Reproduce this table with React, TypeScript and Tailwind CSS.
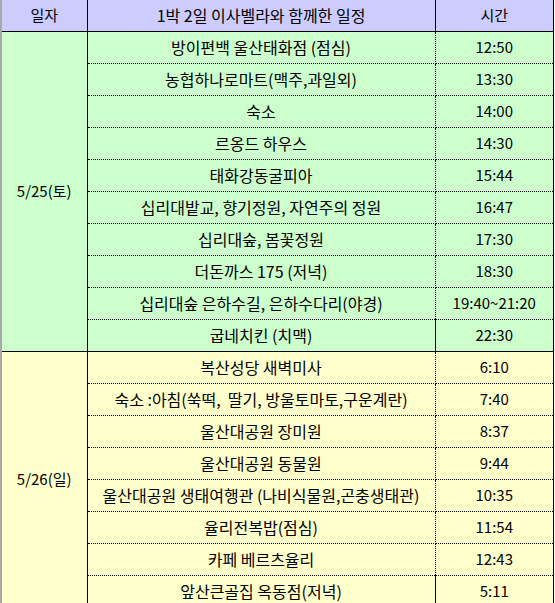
import React from 'react';

type Item = { place: string; time: string };

const day1: Item[] = [
  { place: '방이편백 울산태화점 (점심)', time: '12:50' },
  { place: '농협하나로마트(맥주,과일외)', time: '13:30' },
  { place: '숙소', time: '14:00' },
  { place: '르옹드 하우스', time: '14:30' },
  { place: '태화강동굴피아', time: '15:44' },
  { place: '십리대밭교, 향기정원, 자연주의 정원', time: '16:47' },
  { place: '십리대숲, 봄꽃정원', time: '17:30' },
  { place: '더돈까스 175 (저녁)', time: '18:30' },
  { place: '십리대숲 은하수길, 은하수다리(야경)', time: '19:40~21:20' },
  { place: '굽네치킨 (치맥)', time: '22:30' },
];

const day2: Item[] = [
  { place: '복산성당 새벽미사', time: '6:10' },
  { place: '숙소 :아침(쑥떡,  딸기, 방울토마토,구운계란)', time: '7:40' },
  { place: '울산대공원 장미원', time: '8:37' },
  { place: '울산대공원 동물원', time: '9:44' },
  { place: '울산대공원 생태여행관 (나비식물원,곤충생태관)', time: '10:35' },
  { place: '율리전복밥(점심)', time: '11:54' },
  { place: '카페 베르츠율리', time: '12:43' },
  { place: '앞산큰골집 옥동점(저녁)', time: '5:11' },
];

function Section({ date, items, bg }: { date: string; items: Item[]; bg: string }) {
  return (
    <>
      {items.map((it, i) => {
        const last = i === items.length - 1;
        const rowBorder = last ? 'border-b border-solid border-black' : 'border-b border-dotted border-black';
        return (
          <tr key={i} className={bg}>
            {i === 0 && (
              <td
                rowSpan={items.length}
                className="border-b border-r border-solid border-black text-center align-middle"
              >
                {date}
              </td>
            )}
            <td className={`h-[32px] p-0 text-center align-middle whitespace-pre text-[16px] ${rowBorder} border-r border-r-black border-r-solid`}>
              {it.place}
            </td>
            <td className={`h-[32px] p-0 text-center align-middle ${rowBorder}`}>{it.time}</td>
          </tr>
        );
      })}
    </>
  );
}

export default function App() {
  return (
    <div className="w-[555px] h-[603px] overflow-hidden bg-white">
      <div className="border-l-2 border-[#a8a8a8] w-[554px]">
        <table
          className="w-[552px] table-fixed border-collapse border-r border-black text-[15px] text-black"
          style={{ fontFamily: '"Noto Sans CJK KR", "Noto Sans", sans-serif' }}
        >
          <colgroup>
            <col className="w-[85px]" />
            <col className="w-[348px]" />
            <col />
          </colgroup>
          <thead>
            <tr className="bg-[#ccccff]">
              <th className="h-[31px] p-0 font-normal text-center border-b border-r border-black">일자</th>
              <th className="h-[31px] p-0 font-normal text-center text-[16px] border-b border-r border-black">1박 2일 이사벨라와 함께한 일정</th>
              <th className="h-[31px] p-0 font-normal text-center border-b border-black">시간</th>
            </tr>
          </thead>
          <tbody>
            <Section date="5/25(토)" items={day1} bg="bg-[#ccffcc]" />
            <Section date="5/26(일)" items={day2} bg="bg-[#ffffcc]" />
          </tbody>
        </table>
      </div>
    </div>
  );
}
